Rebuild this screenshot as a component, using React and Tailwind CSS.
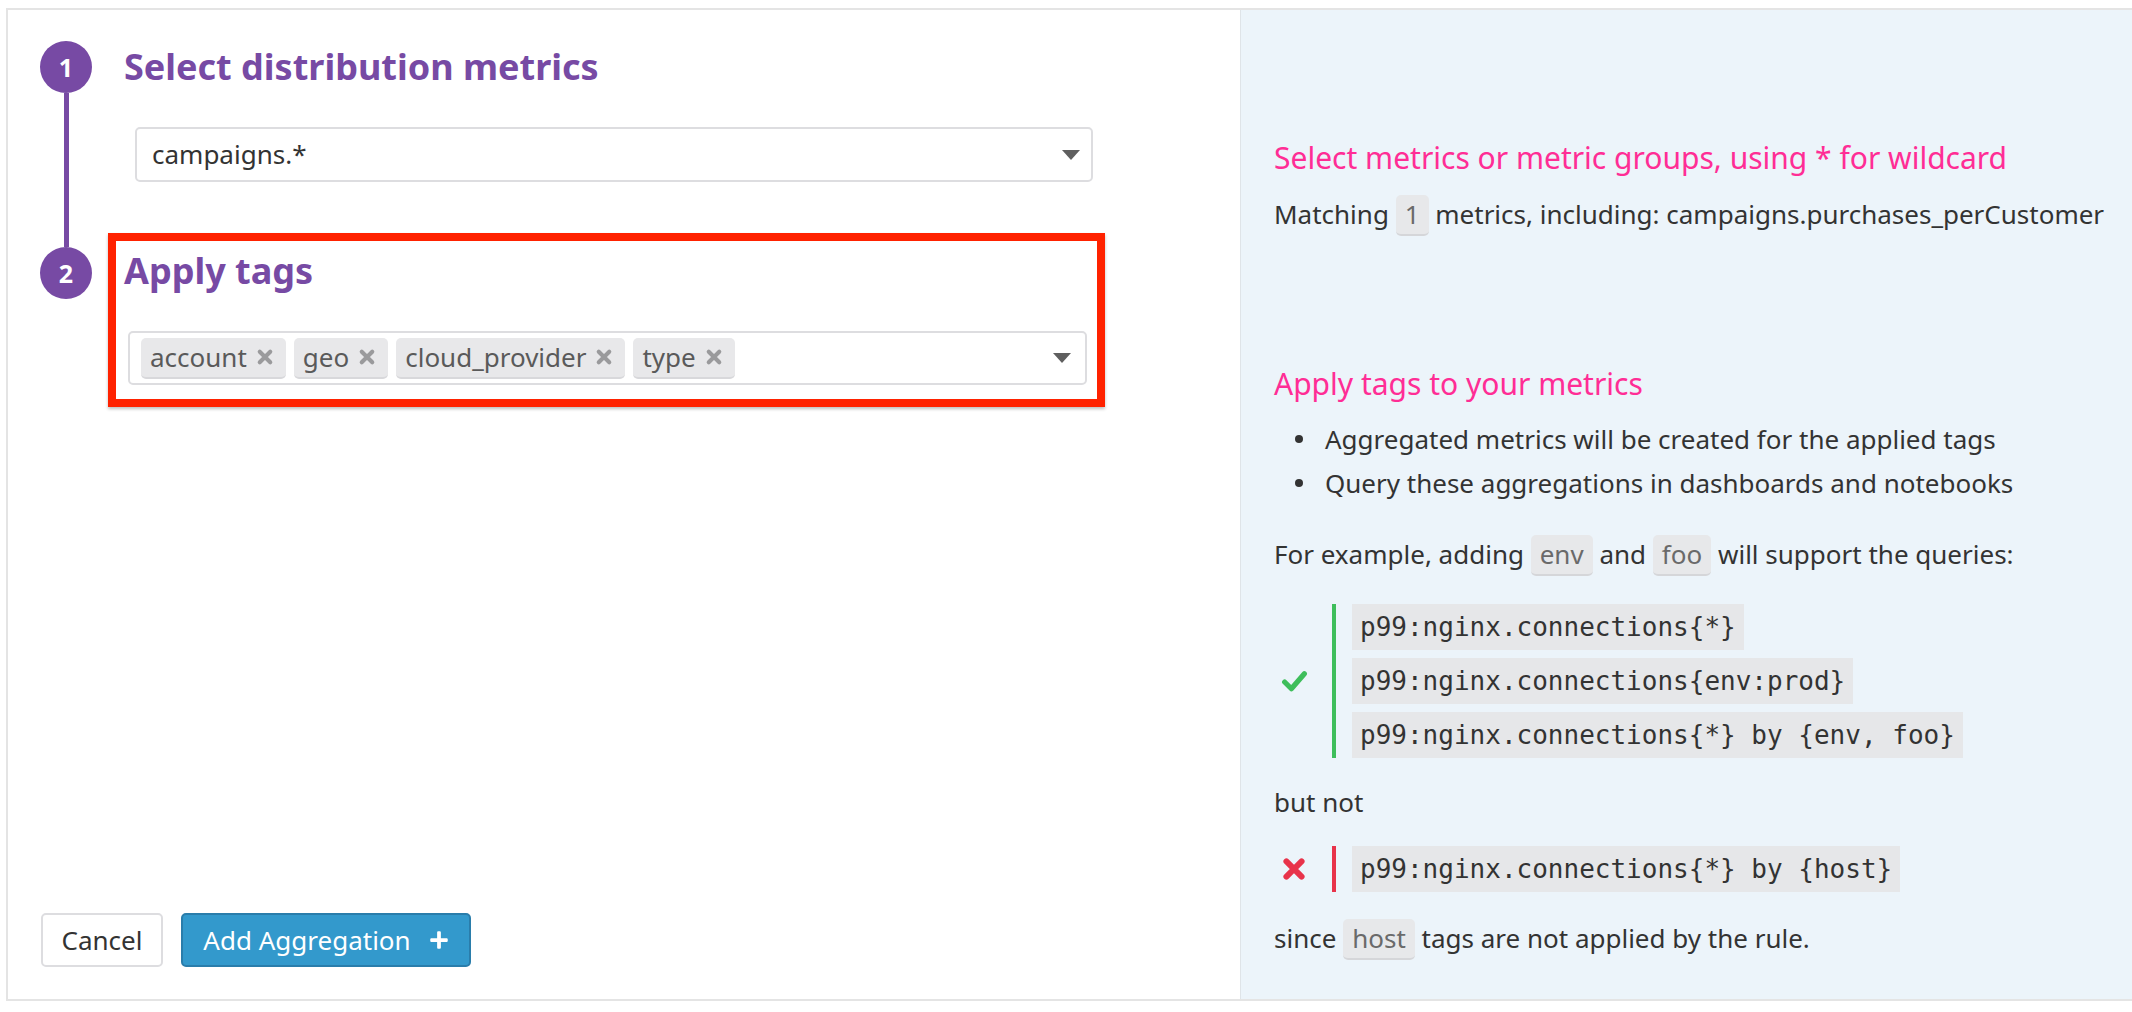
import { FaPlus } from 'react-icons/fa';

const purple = 'bg-[#774aa4]';

function Caret() {
  return <span className="w-0 h-0 border-x-[9px] border-x-transparent border-t-[10px] border-t-[#5f5f5f]" />;
}

function XMark({ className }) {
  return (
    <svg viewBox="0 0 24 24" className={className} fill="none" stroke="currentColor" strokeWidth="5.5" strokeLinecap="round">
      <path d="M5 5L19 19M19 5L5 19" />
    </svg>
  );
}

function CheckMark({ className }) {
  return (
    <svg viewBox="0 0 26 22" className={className} fill="none" stroke="currentColor" strokeWidth="5" strokeLinecap="round" strokeLinejoin="round">
      <path d="M3.5 11.5L10 18L22.5 3.5" />
    </svg>
  );
}

function StepCircle({ n }) {
  return (
    <div className={`w-[52px] h-[52px] rounded-full ${purple} flex items-center justify-center text-white font-bold text-[25px] leading-none`}>
      {n}
    </div>
  );
}

function Tag({ label }) {
  return (
    <span className="h-[41px] flex items-center gap-[9px] pl-[9px] pr-[12px] rounded-[5px] bg-[#e8e8ea] border-b-2 border-[#d8d8db] text-[#5a5a5a] text-[26px]">
      {label}
      <XMark className="w-[18px] h-[18px] text-[#9a9a9c]" />
    </span>
  );
}

function Chip({ children }) {
  return (
    <span className="inline-block h-[41px] px-[9px] rounded-[5px] bg-[#e7e8ea] border-b-2 border-[#d5d6d9] leading-[39px] text-[#6a6a6a]">
      {children}
    </span>
  );
}

function Code({ children }) {
  return (
    <div className="h-[46px] px-[8px] bg-[#e6e7e9] font-['DejaVu_Sans_Mono',monospace] text-[26px] leading-[46px] text-[#333] whitespace-pre">
      {children}
    </div>
  );
}

function LeftPanel() {
  return (
    <div className="w-[1232px] flex flex-col bg-white">
      <div className="flex pt-[31px] pl-[32px]">
        <div className="w-[52px] flex flex-col items-center">
          <StepCircle n="1" />
          <div className={`w-[5px] flex-1 ${purple}`} />
        </div>
        <div className="ml-[32px] pb-[65px]">
          <h2 className="h-[52px] leading-[52px] text-[36px] font-bold text-[#774aa4]">Select distribution metrics</h2>
          <div className="mt-[34px] ml-[11px] w-[958px] h-[55px] border-2 border-[#dddde0] rounded-[5px] flex items-center justify-between pl-[15px] pr-[11px] text-[26px] text-[#333]">
            campaigns.*
            <Caret />
          </div>
        </div>
      </div>

      <div className="flex pl-[32px]">
        <div className="w-[52px] flex flex-col items-center">
          <StepCircle n="2" />
        </div>
        <div className="ml-[16px] -mt-[14px] w-[997px] border-[8px] border-[#ff2200] shadow-[0_2px_3px_rgba(0,0,0,0.25)] pl-[8px] pt-[4px] pr-[10px] pb-[14px]">
          <h2 className="h-[52px] leading-[52px] text-[36px] font-bold text-[#774aa4]">Apply tags</h2>
          <div className="mt-[34px] ml-[4px] h-[54px] border-2 border-[#dddde0] rounded-[5px] flex items-center pl-[11px] pr-[14px] gap-[8px]">
            <Tag label="account" />
            <Tag label="geo" />
            <Tag label="cloud_provider" />
            <Tag label="type" />
            <span className="ml-auto flex">
              <Caret />
            </span>
          </div>
        </div>
      </div>

      <div className="mt-auto pl-[33px] pb-[32px] flex gap-[18px] text-[26px]">
        <button className="w-[122px] h-[54px] border-2 border-[#dddde0] rounded-[5px] bg-white text-[#333]">Cancel</button>
        <button className="w-[290px] h-[54px] border-2 border-[#2a7dab] rounded-[5px] bg-[#3399cc] text-white flex items-center justify-center gap-[18px]">
          Add Aggregation
          <FaPlus className="w-[20px] h-[20px]" />
        </button>
      </div>
    </div>
  );
}

function RightPanel() {
  return (
    <div className="flex-1 bg-[#ecf4fa] border-l border-[#dfe4e8] pl-[33px] pt-[128px] text-[26px] text-[#333]">
      <h3 className="text-[30px] leading-[40px] text-[#ff2d95]">Select metrics or metric groups, using * for wildcard</h3>
      <p className="mt-[16px] leading-[41px]">
        Matching <Chip>1</Chip> metrics, including: campaigns.purchases_perCustomer
      </p>

      <h3 className="mt-[128px] text-[30px] leading-[40px] text-[#ff2d95]">Apply tags to your metrics</h3>
      <div className="mt-[13px]">
        {['Aggregated metrics will be created for the applied tags', 'Query these aggregations in dashboards and notebooks'].map((t) => (
          <div key={t} className="h-[44px] flex items-center">
            <span className="ml-[21px] w-[8px] h-[8px] rounded-full bg-[#333]" />
            <span className="ml-[22px]">{t}</span>
          </div>
        ))}
      </div>

      <p className="mt-[29px] leading-[41px]">
        For example, adding <Chip>env</Chip> and <Chip>foo</Chip> will support the queries:
      </p>

      <div className="mt-[28px] flex">
        <div className="w-[58px] flex items-center pl-[7px]">
          <CheckMark className="w-[27px] h-[23px] text-[#3ebe5b]" />
        </div>
        <div className="border-l-4 border-[#3ebe5b] pl-[16px] flex flex-col items-start gap-[8px]">
          <Code>p99:nginx.connections{'{*}'}</Code>
          <Code>p99:nginx.connections{'{env:prod}'}</Code>
          <Code>p99:nginx.connections{'{*} by {env, foo}'}</Code>
        </div>
      </div>

      <p className="mt-[24px] leading-[40px]">but not</p>

      <div className="mt-[24px] flex">
        <div className="w-[58px] flex items-center pl-[7px]">
          <XMark className="w-[26px] h-[26px] text-[#e8334a]" />
        </div>
        <div className="border-l-4 border-[#e8334a] pl-[16px] flex flex-col items-start">
          <Code>p99:nginx.connections{'{*} by {host}'}</Code>
        </div>
      </div>

      <p className="mt-[26px] leading-[41px]">
        since <Chip>host</Chip> tags are not applied by the rule.
      </p>
    </div>
  );
}

export default function App() {
  return (
    <div className="w-[2132px] h-[1012px] bg-white pt-[8px] pl-[6px] overflow-hidden font-['Noto_Sans',sans-serif]">
      <div className="h-[993px] flex border-2 border-r-0 border-[#e4e4e4]">
        <LeftPanel />
        <RightPanel />
      </div>
    </div>
  );
}
